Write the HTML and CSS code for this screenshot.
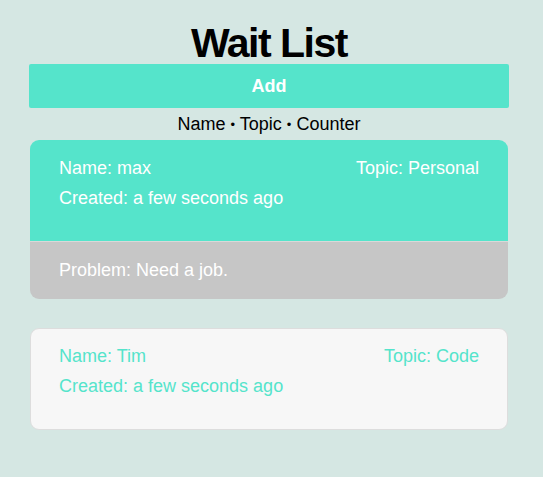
FILE: index.html
```html
<!DOCTYPE html>
<html>
<head>
<meta charset="utf-8">
<link rel="stylesheet" href="styles.css">
</head>
<body>
<main class="app">
  <h1 class="title">Wait List</h1>
  <button class="add-btn">Add</button>
  <div class="legend">Name <span class="dot">•</span> Topic <span class="dot">•</span> Counter</div>
  <div class="list">
    <div class="card card--open">
      <div class="card-head">
        <div class="row">
          <span>Name: max</span>
          <span>Topic: Personal</span>
        </div>
        <div class="row">
          <span>Created: a few seconds ago</span>
        </div>
      </div>
      <div class="card-body">
        <span>Problem: Need a job.</span>
      </div>
    </div>
    <div class="card card--closed">
      <div class="card-head">
        <div class="row">
          <span>Name: Tim</span>
          <span>Topic: Code</span>
        </div>
        <div class="row">
          <span>Created: a few seconds ago</span>
        </div>
      </div>
    </div>
  </div>
</main>
</body>
</html>
```
FILE: styles.css
```css
html, body {
  margin: 0;
  padding: 0;
  background: #d5e7e3;
  font-family: "Liberation Sans", Arial, sans-serif;
}
.app {
  width: 480px;
  margin-left: 29px;
  padding-top: 22px;
  display: flex;
  flex-direction: column;
}
.title {
  margin: 0;
  font-size: 41px;
  line-height: 42px;
  font-weight: bold;
  letter-spacing: -1.5px;
  text-align: center;
  color: #000;
}
.add-btn {
  height: 44px;
  border: none;
  border-radius: 2px;
  background: #55e4cb;
  color: #fff;
  font-family: inherit;
  font-size: 18px;
  font-weight: bold;
  padding: 0;
}
.legend {
  text-align: center;
  font-size: 18px;
  line-height: 32px;
  height: 32px;
  color: #000;
}
.dot {
  font-size: 13px;
  line-height: 0;
  vertical-align: 1px;
}
.list {
  display: flex;
  flex-direction: column;
  gap: 29px;
  margin: 0 1px;
}
.card {
  border-radius: 9px;
  overflow: hidden;
  font-size: 18px;
  line-height: 30px;
}
.card-head {
  padding: 13px 29px 28px;
}
.row {
  display: flex;
  justify-content: space-between;
}
.card--open .card-head {
  background: #55e4cb;
  color: #fff;
}
.card-body {
  background: #c6c6c6;
  color: #fff;
  border-top: 1px solid #d9d9d9;
  padding: 13px 29px 14px;
}
.card--closed {
  background: #f7f7f7;
  border: 1px solid #dddddd;
  color: #55e4cb;
}
.card--closed .card-head {
  padding: 12px 28px 28px;
}
```
